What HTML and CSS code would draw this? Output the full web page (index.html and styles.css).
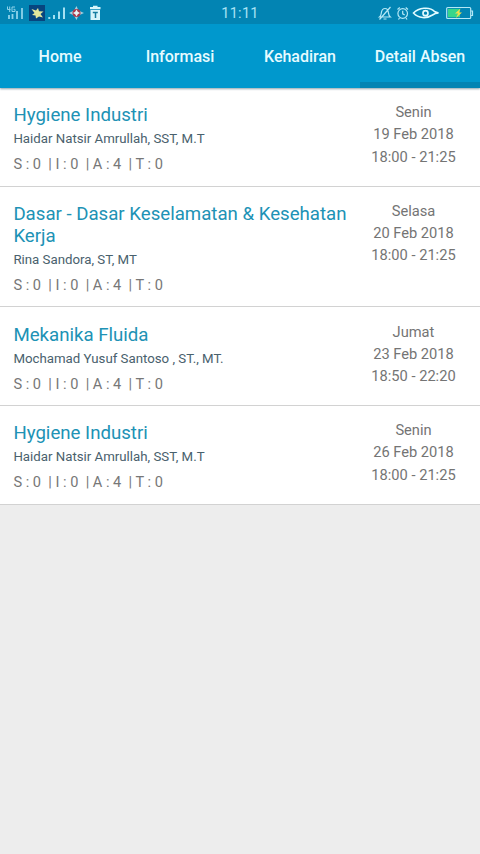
FILE: index.html
```html
<!DOCTYPE html>
<html lang="id">
<head>
<meta charset="utf-8">
<title>Detail Absen</title>
<link rel="stylesheet" href="styles.css">
</head>
<body>
<header class="appbar">
  <div class="status">
    <svg class="status-left" width="110" height="24" viewBox="0 0 110 24" fill="none">
      <g stroke="#8ed3ea" stroke-width="1">
        <path d="M7.500 5.500v3h3M9.700 5.500v5.500M15 6h-3v4.500h3V8.300h-1.500"/>
        <path d="M9 14v4M12.500 13v5" stroke-width="1.800"/>
        <path d="M17 10v8M22 7v11" stroke-width="1.800"/>
      </g>
      <rect x="29" y="4" width="16" height="16" fill="#07457f"/>
      <path d="M31.500 8l4.500 1.500 2-2.500 1 3.200 4.500.300-3 2.500 2.500 3.500-4-1-3 2-.500-3-3.500-.500 2.500-2z" fill="#e3e79c"/>
      <g fill="#a4e0f2"><path d="M48.300 16h2v2h-2zM53 14h2v4h-2zM58 10.500h2v7.500h-2zM63 6.500h2v11.500h-2z"/></g>
      <path d="M76.500 5l2 4.500 5.500 2.500-5.500 2.500-2 4.500-2.500-4.500-5-2.500 5-2.500z" fill="#a3cfde"/>
      <circle cx="76.500" cy="12" r="4" fill="#a8394d"/>
      <path d="M76.500 8.500l1.300 2.300 2.200 1.200-2.200 1.300-1.300 2.200-1.300-2.200-2.200-1.300 2.200-1.200z" fill="#e8f2f5"/>
      <path d="M90 6h3V4.800h4.500V6h3v2.300H90zM90.500 9h9.500v10h-9.500z" fill="#d6f5fb"/>
      <path d="M92.800 11.500h5M95.500 11.500v5.500" stroke="#147d9f" stroke-width="1.500"/>
    </svg>
    <span class="clock">11:11</span>
    <svg class="status-right" width="104" height="24" viewBox="376 0 104 24" fill="none" stroke="#b5e8f6" stroke-width="1.200">
      <path d="M379.500 16c2-1.500 1.500-3 2-5 .500-2.500 1.800-3.500 3.500-3.500s3 1 3.300 3.500c.300 2 .200 3.500 2 5zM383.500 18h3M390.500 6l-11 12.500"/>
      <circle cx="402.700" cy="12.500" r="4.800"/>
      <path d="M402.700 9.800v3l2 1.200M397.500 8.500l2.300-2M405.700 6.500l2.300 2M399.500 17l-1 1.500M406 17l1 1.500"/>
      <path d="M413.500 12c5-5 16-7 21-1.500l4 1.500c-3 0-4 .5-6 2-6 4-14 3.500-19-2z" stroke="#e2fbff" stroke-width="1.600"/>
      <circle cx="425.500" cy="12.200" r="2.500" stroke="#e2fbff" stroke-width="1.700"/>
      <rect x="446.700" y="6.500" width="24" height="11" rx="1"/>
      <path d="M471 10h1.500v4.500H471"/>
      <rect x="448" y="7.800" width="12" height="8.500" fill="#36d58b" stroke="none"/>
      <path d="M460.500 7.500l-5.500 5h3l-2 4.500 6-5.500h-3z" fill="#f0dc4c" stroke="none"/>
    </svg>
  </div>
  <nav class="tabs">
    <a class="tab">Home</a>
    <a class="tab">Informasi</a>
    <a class="tab">Kehadiran</a>
    <a class="tab active">Detail Absen</a>
  </nav>
</header>
<main class="list">
  <article class="row">
    <div class="info">
      <h2 class="course">Hygiene Industri</h2>
      <p class="lecturer">Haidar Natsir Amrullah, SST, M.T</p>
      <p class="stats">S : 0  | I : 0  | A : 4  | T : 0</p>
    </div>
    <div class="when"><span>Senin</span><span>19 Feb 2018</span><span>18:00 - 21:25</span></div>
  </article>
  <article class="row">
    <div class="info">
      <h2 class="course">Dasar - Dasar Keselamatan &amp; Kesehatan Kerja</h2>
      <p class="lecturer">Rina Sandora, ST, MT</p>
      <p class="stats">S : 0  | I : 0  | A : 4  | T : 0</p>
    </div>
    <div class="when"><span>Selasa</span><span>20 Feb 2018</span><span>18:00 - 21:25</span></div>
  </article>
  <article class="row">
    <div class="info">
      <h2 class="course">Mekanika Fluida</h2>
      <p class="lecturer">Mochamad Yusuf Santoso , ST., MT.</p>
      <p class="stats">S : 0  | I : 0  | A : 4  | T : 0</p>
    </div>
    <div class="when"><span>Jumat</span><span>23 Feb 2018</span><span>18:50 - 22:20</span></div>
  </article>
  <article class="row">
    <div class="info">
      <h2 class="course">Hygiene Industri</h2>
      <p class="lecturer">Haidar Natsir Amrullah, SST, M.T</p>
      <p class="stats">S : 0  | I : 0  | A : 4  | T : 0</p>
    </div>
    <div class="when"><span>Senin</span><span>26 Feb 2018</span><span>18:00 - 21:25</span></div>
  </article>
</main>
</body>
</html>
```
FILE: styles.css
```css
* { box-sizing: border-box; }
body {
  margin: 0;
  min-height: 854px;
  background: #ededed;
  font-family: Roboto, "Liberation Sans", sans-serif;
}
.appbar {
  position: relative;
  height: 87.5px;
  margin-bottom: .5px;
  background: #0098cd;
  box-shadow: 0 1px 2px rgba(0, 50, 70, .45);
}
.status {
  display: grid;
  grid-template-columns: 1fr auto 1fr;
  align-items: center;
  height: 24px;
  background: #0284b3;
}
.status-left, .status-right { display: block; }
.status-right { justify-self: end; }
.clock {
  color: #a9e3f5;
  font-size: 14.5px;
  line-height: 24px;
  letter-spacing: .3px;
  padding-top: 2px;
}
.tabs {
  display: grid;
  grid-template-columns: repeat(4, 1fr);
  height: 63.5px;
}
.tab {
  display: flex;
  align-items: center;
  justify-content: center;
  border-bottom: 6px solid transparent;
  padding-top: 8px;
  color: #e6fbff;
  font-size: 16px;
  font-weight: 500;
  white-space: nowrap;
}
.active { border-bottom-color: #0284b3; }
.row {
  display: flex;
  justify-content: space-between;
  padding: 16.4px 13px 11.3px 13.4px;
  background: #fff;
  border-bottom: 1px solid #d2d2d2;
}
.info { width: 340px; }
.course, .lecturer, .stats { margin: 0; font-weight: 400; }
.course {
  color: #2092b5;
  font-size: 18.65px;
  line-height: 22px;
}
.lecturer {
  margin-top: 4px;
  color: #49616d;
  font-size: 13.25px;
  line-height: 18px;
}
.stats {
  margin-top: 6px;
  color: #777;
  font-size: 14.6px;
  line-height: 20px;
  white-space: pre;
}
.when {
  display: flex;
  flex-direction: column;
  width: 107px;
  margin-top: -3.2px;
  color: #747474;
  font-size: 14.67px;
  line-height: 22.2px;
  text-align: center;
}
```
